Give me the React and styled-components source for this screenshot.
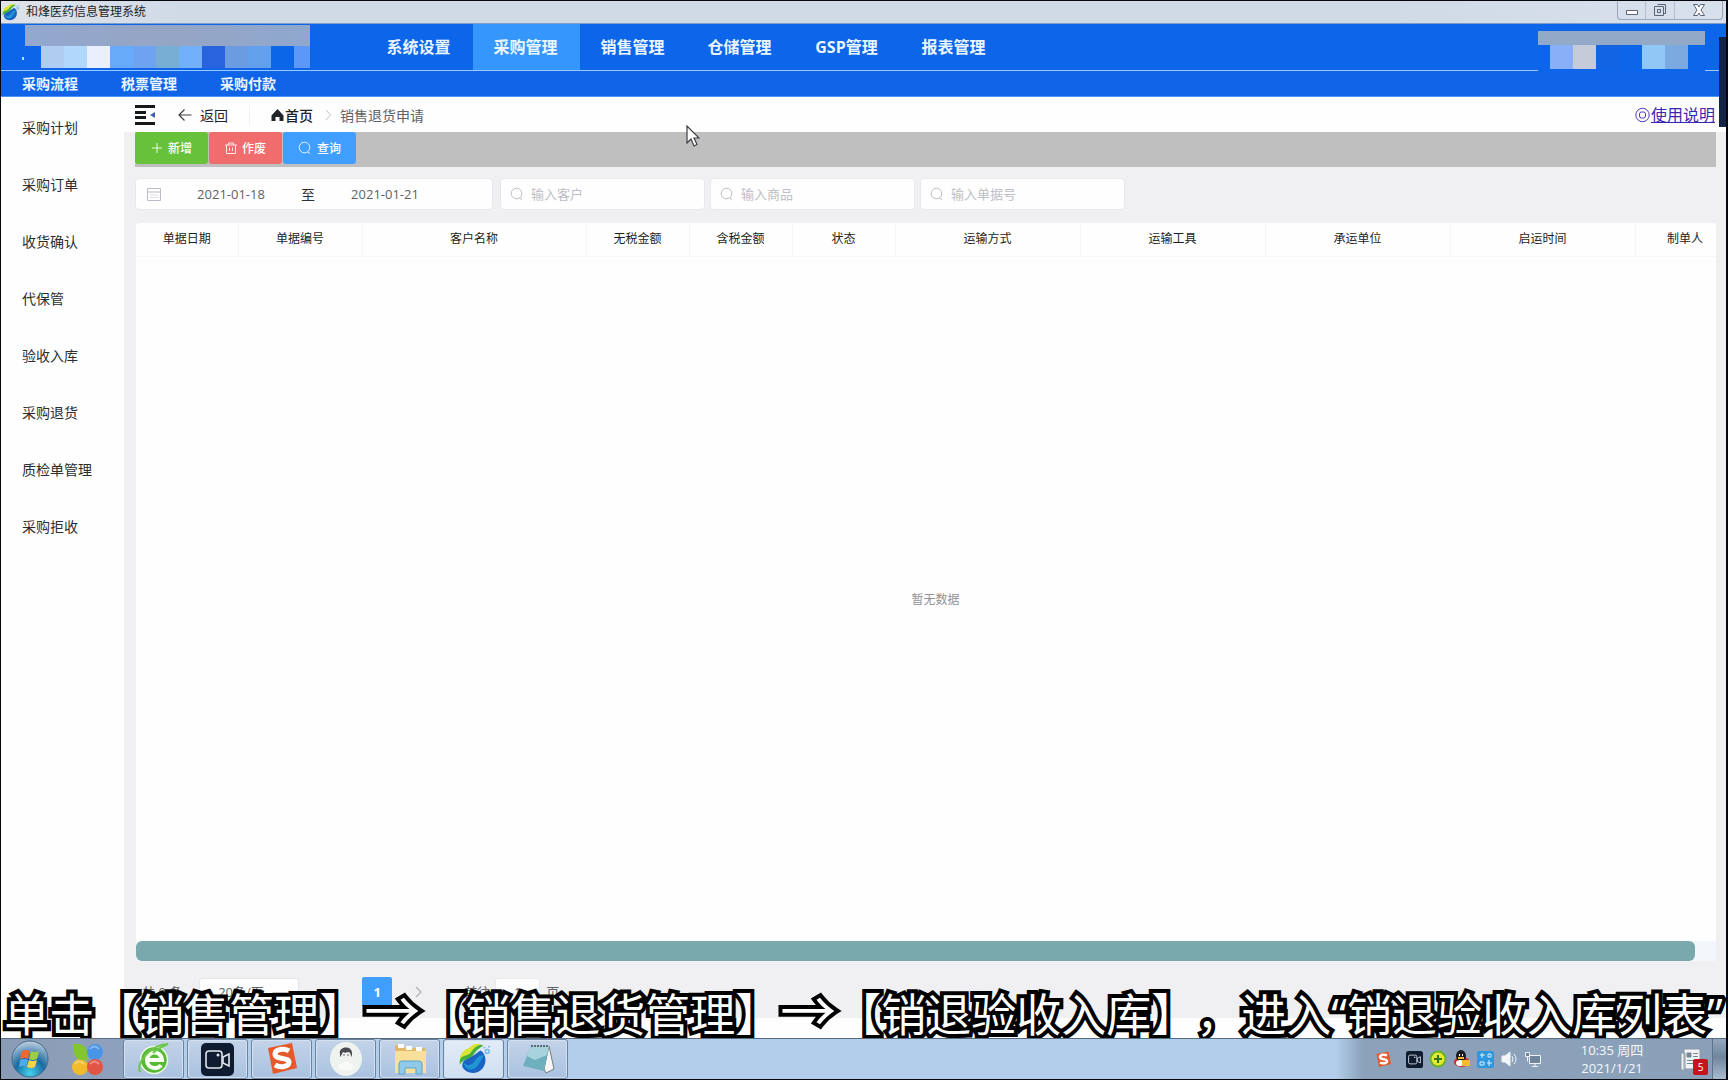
import React from 'react';
import styled, {createGlobalStyle} from 'styled-components';

const GlobalStyle = createGlobalStyle`
    * {
        box-sizing: border-box;
    }
    body {
        margin: 0;
        font-family: 'Open Sans', 'Noto Sans CJK SC', sans-serif;
        font-size: 14px;
        color: #303133;
    }
    button, input, select {
        font-family: inherit;
        margin: 0;
    }
`;

const Desktop = styled.div`
    display: flex;
    flex-direction: column;
    min-height: 100vh;
    position: relative;
    overflow: hidden;
    border: 1px solid #05070c;
    border-right-width: 2px;
    background-color: #fefefe;
`;

// ---- window frame ----

const TitleBar = styled.div`
    display: flex;
    align-items: center;
    height: 23px;
    background: linear-gradient(90deg, #dfe3ea 0, #d0dae7 180px, #d0dae7 80%, #d8e0ec);
    border-bottom: 1px solid #7d9cc6;
`;

const WindowTitle = styled.h1`
    flex: 1;
    margin: 0 0 0 6px;
    font-size: 12px;
    font-weight: 400;
    line-height: 20px;
    color: #1c1f24;
`;

const WindowButtons = styled.div`
    display: flex;
    align-self: flex-start;
    height: 19px;
    margin-right: 3px;
    border: 1px solid #9aa7ba;
    border-top: none;
    border-radius: 0 0 4px 4px;
`;

const WindowButton = styled.button`
    display: flex;
    align-items: center;
    justify-content: center;
    width: ${props => props.$width}px;
    padding: 0;
    border: none;
    border-right: 1px solid #b4bfce;
    background: none;
    &:last-child {
        border-right: none;
    }
`;

// ---- top navigation ----

const Header = styled.header`
    display: flex;
    height: 47px;
    background-color: #0d65ea;
    border-bottom: 1px solid #9cc9fb;
`;

const Brand = styled.div`
    width: 365px;
    padding: 1px 0 0 24px;
    margin-right: 107px;
    margin-right: 0;
`;

const BrandBar = styled.div`
    width: 285px;
    height: 21px;
    background: linear-gradient(90deg, #93a8cf, #95a5c4 50%, #8fa8cf);
`;

const Tiles = styled.div`
    display: flex;
    height: ${props => props.$height}px;
    padding-left: ${props => props.$indent}px;
`;

const Tile = styled.span`
    width: ${props => props.$width || 23}px;
    background-color: ${props => props.$color};
`;

const BrandDot = styled.span`
    align-self: center;
    width: 2px;
    height: 3px;
    margin: 2px 17px 0 -3px;
    background-color: #b5dcff;
`;

const MainNav = styled.nav`
    display: flex;
    flex: 1;
`;

const NavLink = styled.a`
    display: flex;
    align-items: center;
    justify-content: center;
    width: 107px;
    padding: 0 2px 2px 0;
    font-size: 16px;
    font-weight: 700;
    color: #e9f5ff;
    text-decoration: none;
    background-color: ${props => props.$active ? '#3596fc' : 'transparent'};
`;

const Account = styled.div`
    align-self: flex-end;
    width: 167px;
    height: 40px;
    margin: 0 21px -1px 0;
    background-color: #0d65ea;
`;

const AccountBar = styled.div`
    height: 14px;
    background-color: #93a9c8;
`;

const SubNav = styled.nav`
    display: flex;
    align-items: center;
    gap: 43px;
    height: 26px;
    padding-left: 21px;
    background-color: #0f64e8;
    border-bottom: 1px solid #4f93ee;
`;

const SubLink = styled.a`
    font-size: 14px;
    font-weight: 700;
    line-height: 20px;
    color: #e9f5ff;
    text-decoration: none;
`;

// ---- page body ----

const Body = styled.div`
    display: flex;
    flex: 1;
    position: relative;
`;

const Sidebar = styled.nav`
    display: flex;
    flex-direction: column;
    flex: none;
    width: 123px;
    padding: 2px 0 0 21px;
    background-color: #fefefe;
`;

const SideLink = styled.a`
    font-size: 14px;
    line-height: 57px;
    color: #2b2d31;
    text-decoration: none;
`;

const Main = styled.main`
    display: flex;
    flex: 1;
    flex-direction: column;
    min-width: 0;
    background-color: #f0f0f2;
`;

const Crumbs = styled.div`
    display: flex;
    align-items: center;
    height: 35px;
    padding: 0 11px;
    background-color: #fefefe;
`;

const PlainButton = styled.button`
    display: flex;
    align-items: center;
    gap: 8px;
    padding: 0;
    border: none;
    background: none;
    font-size: 14px;
    color: #222429;
`;

const BackButton = styled(PlainButton)`
    margin-left: 22px;
    padding-right: 21px;
    border-right: 1px solid #eef0f4;
`;

const HomeLink = styled.a`
    display: flex;
    align-items: center;
    gap: 1px;
    margin: 0 12px 0 21px;
    font-weight: 500;
    color: #1f2125;
    text-decoration: none;
`;

const CrumbText = styled.span`
    flex: 1;
    margin-left: 8px;
    color: #606266;
`;

const HelpLink = styled.a`
    display: flex;
    align-items: center;
    gap: 1px;
    font-size: 16px;
    line-height: 20px;
    color: #3a26b4;
    text-decoration: none;
    span {
        text-decoration: underline;
    }
`;

const Toolbar = styled.div`
    display: flex;
    align-items: flex-start;
    gap: 1px;
    height: 35px;
    margin: 0 10px 0 11px;
    background-color: #bfbfbf;
`;

const ToolButton = styled.button`
    display: flex;
    align-items: center;
    justify-content: center;
    gap: 5px;
    width: 73px;
    height: 32px;
    padding: 0;
    border: none;
    border-radius: 3px;
    font-size: 12px;
    font-weight: 500;
    color: #fff;
    background-color: ${props => props.$color};
`;

const Filters = styled.form`
    display: flex;
    align-items: center;
    gap: 5px;
    margin: 11px 11px 13px;
`;

const DateRange = styled.div`
    display: flex;
    align-items: center;
    width: 358px;
    height: 32px;
    margin-right: 2px;
    padding-left: 11px;
    border: 1px solid #e8e9ed;
    border-radius: 4px;
    background-color: #fefefe;
`;

const DateInput = styled.input`
    width: 140px;
    padding: 0;
    border: none;
    outline: none;
    background: none;
    font-size: 13px;
    text-align: center;
    color: #606266;
`;

const SearchBox = styled.label`
    display: flex;
    align-items: center;
    gap: 7px;
    width: 205px;
    height: 32px;
    padding-left: 9px;
    border: 1px solid #e8e9ed;
    border-radius: 4px;
    background-color: #fefefe;
    input {
        flex: 1;
        min-width: 0;
        padding: 0;
        border: none;
        outline: none;
        background: none;
        font-size: 13px;
    }
    input::placeholder {
        color: #bdbfc5;
    }
`;

const TablePanel = styled.div`
    display: flex;
    flex: 1;
    flex-direction: column;
    margin: 0 10px 0 12px;
    overflow: hidden;
    background-color: #fefefe;
    border-radius: 4px 4px 0 0;
`;

const TableScroll = styled.div`
    display: flex;
    flex: 1;
    flex-direction: column;
    min-width: 1599px;
`;

const Table = styled.table`
    width: 100%;
    table-layout: fixed;
    border-collapse: collapse;
`;

const HeadCell = styled.th`
    width: ${props => props.$width}px;
    height: 33px;
    padding: 0;
    border-right: 1px solid #f4f5f8;
    border-bottom: 1px solid #f6f7f9;
    font-size: 12px;
    font-weight: 400;
    line-height: 16px;
    color: #1c1e22;
`;

const Empty = styled.div`
    display: flex;
    flex: 1;
    align-items: center;
    justify-content: center;
    font-size: 12px;
    color: #909399;
`;

const ScrollTrack = styled.div`
    height: 20px;
    margin: 0 10px 0 12px;
    padding-right: 21px;
    background-color: #f3f7fc;
`;

const ScrollThumb = styled.div`
    height: 20px;
    border-radius: 6px;
    background-color: #79a9ac;
`;

const Pagination = styled.div`
    display: flex;
    align-items: center;
    height: 57px;
    padding: 4px 0 0 18px;
    font-size: 13px;
    color: #606266;
`;

const PageSize = styled.select`
    appearance: none;
    width: 100px;
    height: 28px;
    margin: 0 63px 0 17px;
    padding: 0 0 0 18px;
    border: 1px solid #e4e6ea;
    border-radius: 3px;
    background-color: #fefefe;
    font-size: 13px;
    color: #606266;
`;

const PageButton = styled.button`
    width: 30px;
    height: 30px;
    padding: 0;
    border: none;
    border-radius: 2px;
    font-size: 13px;
    font-weight: 700;
    color: #fff;
    background-color: #409eff;
`;

const NextButton = styled(PlainButton)`
    margin: 0 38px 0 20px;
    color: #b4b8c0;
`;

const PageInput = styled.input`
    width: 45px;
    height: 28px;
    margin: 0 6px 0 5px;
    padding: 0;
    border: 1px solid #e8e9ed;
    border-radius: 3px;
    background-color: #fefefe;
    font-size: 13px;
    text-align: center;
    color: #606266;
`;

const BottomStrip = styled.div`
    height: 20px;
    background-color: #fefefe;
`;

// ---- things that float above the page ----

const EdgeScroll = styled.div`
    position: absolute;
    top: 36px;
    right: 0;
    width: 7px;
    height: 90px;
    background-color: #142446;
`;

const Pointer = styled.svg`
    position: absolute;
    left: 685px;
    top: 28px;
`;

const Caption = styled.p`
    position: absolute;
    left: 0;
    right: 0;
    bottom: -1px;
    display: flex;
    justify-content: center;
    align-items: baseline;
    margin: 0;
    font-size: 45px;
    line-height: 48px;
    white-space: pre;
    text-spacing-trim: space-all;
    font-kerning: none;
    color: #fff;
    -webkit-text-stroke: 8px #000;
    stroke-linejoin: round;
    paint-order: stroke fill;
`;

const CaptionArrow = styled.span`
    font-family: 'Noto Sans CJK SC', sans-serif;
    font-size: 56px;
`;

// ---- taskbar ----

const Taskbar = styled.footer`
    display: flex;
    height: 41px;
    position: relative;
    border-top: 1px solid #566b80;
    background: linear-gradient(90deg, #899bb5 0, #8fa2bd 122px, #b2ceea 124px, #b2ceea 1335px, #8ba2ba 1362px, #8aa0b8);
`;

const Pinned = styled.button`
    display: flex;
    align-items: center;
    justify-content: center;
    width: 58px;
    padding: 0;
    border: none;
    background: none;
`;

const TaskButtons = styled.div`
    display: flex;
    flex: 1;
    gap: 3px;
    padding-left: 6px;
`;

const TaskButton = styled.button`
    display: flex;
    align-items: center;
    justify-content: center;
    width: 61px;
    height: 40px;
    padding: 0;
    border: 1px solid #6b819d;
    border-radius: 3px;
    background: ${props => props.$active
        ? 'linear-gradient(#e3ecf7, #cfdff1)'
        : 'linear-gradient(#c3d3e8, #a9c2e0)'};
    box-shadow: inset 0 0 0 1px #d4e1f0;
`;

const Tray = styled.div`
    display: flex;
    align-items: center;
    gap: 6px;
    margin-right: 38px;
`;

const Clock = styled.time`
    align-self: center;
    width: 64px;
    font-size: 13px;
    line-height: 18px;
    text-align: center;
    color: #f4f8fc;
`;

const Notes = styled.button`
    position: relative;
    align-self: center;
    width: 32px;
    height: 32px;
    margin: 0 2px 0 34px;
    padding: 0;
    border: none;
    background: none;
`;

const Badge = styled.span`
    position: absolute;
    right: 2px;
    bottom: 0;
    width: 15px;
    height: 16px;
    border-radius: 2px;
    font-size: 10px;
    line-height: 16px;
    text-align: center;
    color: #fff;
    background-color: #c5161d;
`;

const ShowDesktop = styled.button`
    width: 14px;
    padding: 0;
    border: none;
    border-left: 1px solid #5f7288;
    background: linear-gradient(#93a8bf, #6f86a0 45%, #a9bccf);
`;

// ---- icons ----

const LeafLogo = ({size = 19}) => (
    <svg width={size} height={size} viewBox="0 0 36 36">
        <path d="M13 16c5-1 8-5 12-7 6 4 7 13 2 19-6 7-17 6-21-1-1-3 0-5 1-7z" fill="#1a63c4" />
        <path d="M7 22c4 4 8 3 11-1 4-6 6-7 11-7-3 3-4 7-7 11-4 6-13 6-15-3z" fill="#1f95d4" />
        <path d="M3 24C2 11 12 11 17 5c3-3 7-3 11-1-6 3-8 6-11 10-4 5-10 3-14 10z" fill="#43ae3b" />
        <path d="M3 18C4 8 12 8 17 3c3-2 6-1 8 0-6 2-8 5-11 9-3 3-8 2-11 6z" fill="#d9e437" />
        <circle cx="32" cy="10" r="2" fill="none" stroke="#6bb6ea" strokeWidth="1.500" />
        <circle cx="34" cy="5" r="1" fill="#6bb6ea" />
        <circle cx="29" cy="6" r="1" fill="#6bb6ea" />
    </svg>
);

const SearchIcon = ({color = '#b9bcc4'}) => (
    <svg width="14" height="14" viewBox="0 0 14 14" fill="none" stroke={color}>
        <circle cx="6.5" cy="6.5" r="5.3" />
        <path d="M9.500 11l2.500 1.500" />
    </svg>
);

const CalendarIcon = () => (
    <svg width="14" height="14" viewBox="0 0 14 14" fill="none" stroke="#b9bcc4">
        <path d="M.5 1.5h13v12H.5zM.5 5h13" />
        <path d="M3 8h8M3 10.500h8" stroke="#dcdee3" />
    </svg>
);

const SogouIcon = ({size = 34}) => (
    <svg width={size} height={size} viewBox="0 0 34 34">
        <path d="M3 6L27 1l5 25-24 6z" fill="#e5592a" />
        <path d="M24 9c-5-3-14-2-14 3 0 6 14 3 14 8 0 5-9 6-14 3" fill="none" stroke="#fff" strokeWidth="5" />
    </svg>
);

const CameraIcon = ({size = 33}) => (
    <svg width={size} height={size} viewBox="0 0 33 33">
        <rect width="33" height="33" rx="5" fill="#0f1c30" />
        <rect x="5" y="8" width="16" height="17" rx="3" fill="none" stroke="#dfe6ee" strokeWidth="1.600" />
        <path d="M22 14l6-3v12l-6-3z" fill="none" stroke="#dfe6ee" strokeWidth="1.600" />
        <circle cx="17" cy="12" r="1.500" fill="#dfe6ee" />
    </svg>
);

const StartOrb = () => (
    <svg width="40" height="40" viewBox="0 0 40 40">
        <defs>
            <radialGradient id="orb" cx="50%" cy="90%" r="85%">
                <stop offset="0" stopColor="#45d3ee" />
                <stop offset=".5" stopColor="#176a9f" />
                <stop offset="1" stopColor="#b2c6da" />
            </radialGradient>
        </defs>
        <circle cx="20" cy="20" r="18" fill="url(#orb)" stroke="#486a8c" />
        <path d="M12 12q4-2 8 0l-2 8q-4-2-8 0z" fill="#ee6a34" />
        <path d="M21 12q4 2 8 0l-2 8q-4 2-8 0z" fill="#9dcc46" />
        <path d="M10 21q4-2 8 0l-2 7q-4-2-7 0z" fill="#4fa9e6" />
        <path d="M19 21q4 2 8 0l-2 7q-4 2-8 0z" fill="#fbd24b" />
    </svg>
);

const PetalsIcon = () => (
    <svg width="32" height="34" viewBox="0 0 32 34">
        <circle cx="23" cy="10" r="8" fill="#4a94e6" />
        <circle cx="8" cy="25" r="8" fill="#f3bb2c" />
        <circle cx="23" cy="25" r="8" fill="#e25544" />
        <path d="M1 2c11-2 16 5 14 16C5 20 0 13 1 2z" fill="#83c52e" />
        <path d="M18 7q4-5 9 0M3 22q4-5 9 0M18 22q4-5 9 0" stroke="#fff" strokeWidth="2" strokeOpacity=".35" fill="none" />
    </svg>
);

const BrowserIcon = () => (
    <svg width="34" height="36" viewBox="0 0 34 36" fill="none">
        <circle cx="17" cy="19" r="13.500" fill="#58b936" stroke="#e9f7e2" strokeWidth="1.500" />
        <path d="M24 24c-3 5-13 4-14-4-1-10 14-12 15-1H11" stroke="#f6fff0" strokeWidth="4" />
        <path d="M3 31C-1 21 15 3 31 3c-7 3-11 5-15 9" stroke="#6cc84a" strokeWidth="2" />
    </svg>
);

const AvatarIcon = () => (
    <svg width="36" height="36" viewBox="0 0 36 36">
        <ellipse cx="18" cy="18" rx="16" ry="17" fill="#eef3ef" />
        <path d="M12 13c-2-8 12-9 12-1 0 2 0 3-1 4 0-3-1-5-3-5-2 1-4 1-5 0-1 1-1 3-3 5z" fill="#4a4a50" />
        <path d="M16 13v2M20 13v2" stroke="#6a6a70" />
        <path d="M11 24q7-7 14 0v4q-7 3-14 0z" fill="#f8faf7" />
    </svg>
);

const FolderIcon = () => (
    <svg width="36" height="34" viewBox="0 0 36 34">
        <path d="M3 3h8l2 3h20v24H3z" fill="#dfb963" />
        <path d="M6 2h6v4H6zM14 4h6v4h-6zM24 5h6v4h-6z" fill="#fdfdfb" />
        <path d="M3 9h31v22H3z" fill="#f8e09a" />
        <path d="M7 32V22q0-3 3-3h17q3 0 3 3v10h-6v-6H13v6z" fill="#8fcbe8" stroke="#5aa3cc" />
    </svg>
);

const NotepadIcon = () => (
    <svg width="34" height="32" viewBox="0 0 34 32">
        <path d="M28 3l5 23-8 4-2-4z" fill="#f6f7f4" stroke="#747a7e" />
        <path d="M10 3h18l-5 25-21-5z" fill="#6fb0bf" />
        <path d="M10 3h18l-2 9-12 5-8-4z" fill="#a9d3dc" />
        <path d="M10 3h18" stroke="#5c6b74" strokeWidth="2" strokeDasharray="2 1" />
    </svg>
);

const topLinks = ['系统设置', '采购管理', '销售管理', '仓储管理', 'GSP管理', '报表管理'];
const subLinks = ['采购流程', '税票管理', '采购付款'];
const sideLinks = ['采购计划', '采购订单', '收货确认', '代保管', '验收入库', '采购退货', '质检单管理', '采购拒收'];
const searches = ['输入客户', '输入商品', '输入单据号'];

const columns = [
    ['单据日期', 102], ['单据编号', 124], ['客户名称', 224], ['无税金额', 103],
    ['含税金额', 103], ['状态', 103], ['运输方式', 185], ['运输工具', 185],
    ['承运单位', 185], ['启运时间', 185], ['制单人', 100],
];

const brandTiles = ['#afcdf1', '#b2d7fc', '#e9effc', '#66aaf9', '#6ea4ef', '#78aed4', '#72b0fa', '#2a63de', '#6b9ce2', '#62a0ec', '#0b66e8'];

const TopBar = () => (
    <>
        <TitleBar>
            <LeafLogo />
            <WindowTitle>和烽医药信息管理系统</WindowTitle>
            <WindowButtons>
                <WindowButton $width={28} aria-label="最小化">
                    <svg width="14" height="12" fill="#fff" stroke="#5a6477"><path d="M1.500 6.500h11v4h-11z" /></svg>
                </WindowButton>
                <WindowButton $width={29} aria-label="还原">
                    <svg width="14" height="14" fill="none" stroke="#5a6477">
                        <path d="M4.500 1.500h8v9h-2M1.500 3.500h9v9h-9zM4.500 6.500h3v3h-3z" />
                    </svg>
                </WindowButton>
                <WindowButton $width={47} aria-label="关闭">
                    <svg width="14" height="14" fill="#fff" stroke="#5a6477">
                        <path d="M1.500 1.500h4L7 4l1.500-2.500h4L9 7l3.500 5.500h-4L7 10l-1.500 2.500h-4L5 7z" />
                    </svg>
                </WindowButton>
            </WindowButtons>
        </TitleBar>
        <Header>
            <Brand>
                <BrandBar />
                <Tiles $height={22} $indent={0}>
                    <BrandDot />
                    {brandTiles.map(c => <Tile key={c} $color={c} />)}
                    <Tile $color="#5c98f8" $width={16} />
                </Tiles>
            </Brand>
            <MainNav>
                {topLinks.map(name => <NavLink key={name} href="#" $active={name === '采购管理'}>{name}</NavLink>)}
            </MainNav>
            <Account>
                <AccountBar />
                <Tiles $height={24} $indent={12}>
                    <Tile $color="#8aaff9" />
                    <Tile $color="#c6cbd9" />
                    <Tile $color="#1264e2" />
                    <Tile $color="#0d65ea" />
                    <Tile $color="#90c7f7" />
                    <Tile $color="#7baae0" />
                </Tiles>
            </Account>
        </Header>
        <SubNav>
            {subLinks.map(name => <SubLink key={name} href="#">{name}</SubLink>)}
        </SubNav>
    </>
);

const BreadCrumbs = () => (
    <Crumbs>
        <PlainButton aria-label="收起菜单">
            <svg width="21" height="20" viewBox="0 0 21 20">
                <path d="M0 0h20v3H0zM0 6h11v3H0zM0 11h11v3H0zM0 17h20v3H0z" fill="#17181c" />
                <path d="M20 7v6l-5-3z" fill="#4260b0" />
            </svg>
        </PlainButton>
        <BackButton>
            <svg width="14" height="14" fill="none" stroke="#3c3f45" strokeWidth="1.200">
                <path d="M13.500 7H1M6.500 1.500L1 7l5.500 5.500" />
            </svg>
            返回
        </BackButton>
        <HomeLink href="#">
            <svg width="13" height="14" fill="#222429">
                <path d="M6.500 1L12.500 7.500V13H8.500V9h-4v4h-4V7.500z" />
            </svg>
            首页
        </HomeLink>
        <svg width="7" height="12" fill="none" stroke="#c0c4cc"><path d="M1 1l4.500 5L1 11" /></svg>
        <CrumbText>销售退货申请</CrumbText>
        <HelpLink href="#">
            <svg width="15" height="16" fill="none" stroke="#4a3ab8">
                <circle cx="7.500" cy="8" r="6.700" />
                <rect x="4.500" y="5" width="6" height="6" rx="2" />
            </svg>
            <span>使用说明</span>
        </HelpLink>
    </Crumbs>
);

const Actions = () => (
    <Toolbar>
        <ToolButton $color="#67c23a">
            <svg width="12" height="12" stroke="#e8f8e0"><path d="M6 1v10M1 6h10" /></svg>
            新增
        </ToolButton>
        <ToolButton $color="#f16c6c">
            <svg width="12" height="12" fill="none" stroke="#ffe9e9">
                <path d="M0 3h12M3.500 3V1h5v2M1.500 3v8.500h9V3M4.500 5.500v3.500M7.500 5.500v3.500" />
            </svg>
            作废
        </ToolButton>
        <ToolButton $color="#409eff">
            <SearchIcon color="#e6f3ff" />
            查询
        </ToolButton>
    </Toolbar>
);

const FilterBar = () => (
    <Filters>
        <DateRange>
            <CalendarIcon />
            <DateInput aria-label="开始日期" defaultValue="2021-01-18" />
            至
            <DateInput aria-label="结束日期" defaultValue="2021-01-21" />
        </DateRange>
        {searches.map(text => (
            <SearchBox key={text}>
                <SearchIcon />
                <input aria-label={text} placeholder={text} />
            </SearchBox>
        ))}
    </Filters>
);

const DataTable = () => (
    <>
        <TablePanel>
            <TableScroll>
                <Table>
                    <thead>
                        <tr>
                            {columns.map(([name, width]) => <HeadCell key={name} $width={width}>{name}</HeadCell>)}
                        </tr>
                    </thead>
                </Table>
                <Empty>暂无数据</Empty>
            </TableScroll>
        </TablePanel>
        <ScrollTrack>
            <ScrollThumb />
        </ScrollTrack>
    </>
);

const Pager = () => (
    <Pagination>
        <span>共 0 条</span>
        <PageSize aria-label="每页条数">
            <option>20条/页</option>
        </PageSize>
        <PageButton>1</PageButton>
        <NextButton aria-label="下一页">
            <svg width="14" height="14" fill="none" stroke="#b4b8c0" strokeWidth="1.500"><path d="M4 2l5 5-5 5" /></svg>
        </NextButton>
        <span>前往</span>
        <PageInput aria-label="页码" defaultValue="1" />
        <span>页</span>
    </Pagination>
);

const SystemTray = () => (
    <Tray>
        <SogouIcon size={17} />
        <svg width="2" height="2" />
        <CameraIcon size={17} />
        <svg width="18" height="18">
            <circle cx="9" cy="9" r="8.500" fill="#67b32a" />
            <circle cx="9" cy="9" r="6.500" fill="#e5e832" />
            <path d="M9 5v8M5 9h8" stroke="#34721a" strokeWidth="2" />
        </svg>
        <svg width="18" height="18">
            <ellipse cx="9" cy="12" rx="8" ry="5" fill="#d22c2c" />
            <ellipse cx="8" cy="6" rx="5" ry="6" fill="#1a1a20" />
            <ellipse cx="7" cy="13" rx="4" ry="3" fill="#fff" />
            <path d="M6 4h1v2H6zM9 4h1v2H9z" fill="#fff" />
            <path d="M9 10h8v6H9zM5 7h6v2H5z" fill="#f2b93a" />
        </svg>
        <svg width="17" height="18">
            <rect width="17" height="17" rx="2" y="1" fill="#2f97dd" />
            <path d="M3 5h5M5 3v5M11 4h3v3h-3zM3 12h4v3H3zM12 10v6M10 13h5" stroke="#d7f1ff" fill="none" />
        </svg>
        <svg width="18" height="18" fill="none" stroke="#eef3f8">
            <path d="M2 6h3l5-4v14l-5-4H2z" fill="#f4f6f9" />
            <path d="M12 6q2 3 0 6M14 4q4 5 0 10" />
        </svg>
        <svg width="18" height="18" fill="#71869c" stroke="#eef3f8">
            <path d="M5.500 5.500h11v8h-11zM8 16.500h6M11 14v2" />
            <path d="M1.500 2.500h4v4h-4zM3.500 6.500v5" />
        </svg>
    </Tray>
);

const BottomBar = () => (
    <Taskbar>
        <Pinned aria-label="开始"><StartOrb /></Pinned>
        <Pinned aria-label="软件管家"><PetalsIcon /></Pinned>
        <TaskButtons>
            <TaskButton aria-label="浏览器"><BrowserIcon /></TaskButton>
            <TaskButton aria-label="录屏"><CameraIcon /></TaskButton>
            <TaskButton aria-label="输入法"><SogouIcon /></TaskButton>
            <TaskButton aria-label="聊天"><AvatarIcon /></TaskButton>
            <TaskButton aria-label="文件夹"><FolderIcon /></TaskButton>
            <TaskButton aria-label="医药系统" $active><LeafLogo size={34} /></TaskButton>
            <TaskButton aria-label="记事本"><NotepadIcon /></TaskButton>
        </TaskButtons>
        <SystemTray />
        <Clock>10:35 周四 2021/1/21</Clock>
        <Notes aria-label="通知">
            <svg width="32" height="32" viewBox="0 0 32 32">
                <path d="M3 10h4v17H3zM6 6h16v20H6z" fill="#f1f3f5" stroke="#8a97a4" />
                <path d="M9 10h4v4H9zM15 10.500h5M15 13.500h5M9 17.500h11M9 20.500h11" stroke="#7a8793" fill="#7a8793" />
            </svg>
            <Badge>5</Badge>
        </Notes>
        <ShowDesktop aria-label="显示桌面" />
    </Taskbar>
);

const App = () => {
    return <Desktop>
        <GlobalStyle />
        <TopBar />
        <Body>
            <Sidebar>
                {sideLinks.map(name => <SideLink key={name} href="#">{name}</SideLink>)}
            </Sidebar>
            <Main>
                <BreadCrumbs />
                <Actions />
                <FilterBar />
                <DataTable />
                <Pager />
                <BottomStrip />
            </Main>
            <Pointer width="14" height="22" viewBox="0 0 14 22">
                <path d="M1 1v17l4-4 3 7 3-1.500-3-6.500h5z" fill="#fff" stroke="#3a3d44" strokeWidth="1.200" />
            </Pointer>
            <Caption>
                单击【销售管理】<CaptionArrow>→</CaptionArrow>【销售退货管理】<CaptionArrow>→</CaptionArrow>【销退验收入库】，进入“销退验收入库列表”
            </Caption>
        </Body>
        <BottomBar />
        <EdgeScroll />
    </Desktop>
}

export default App;
